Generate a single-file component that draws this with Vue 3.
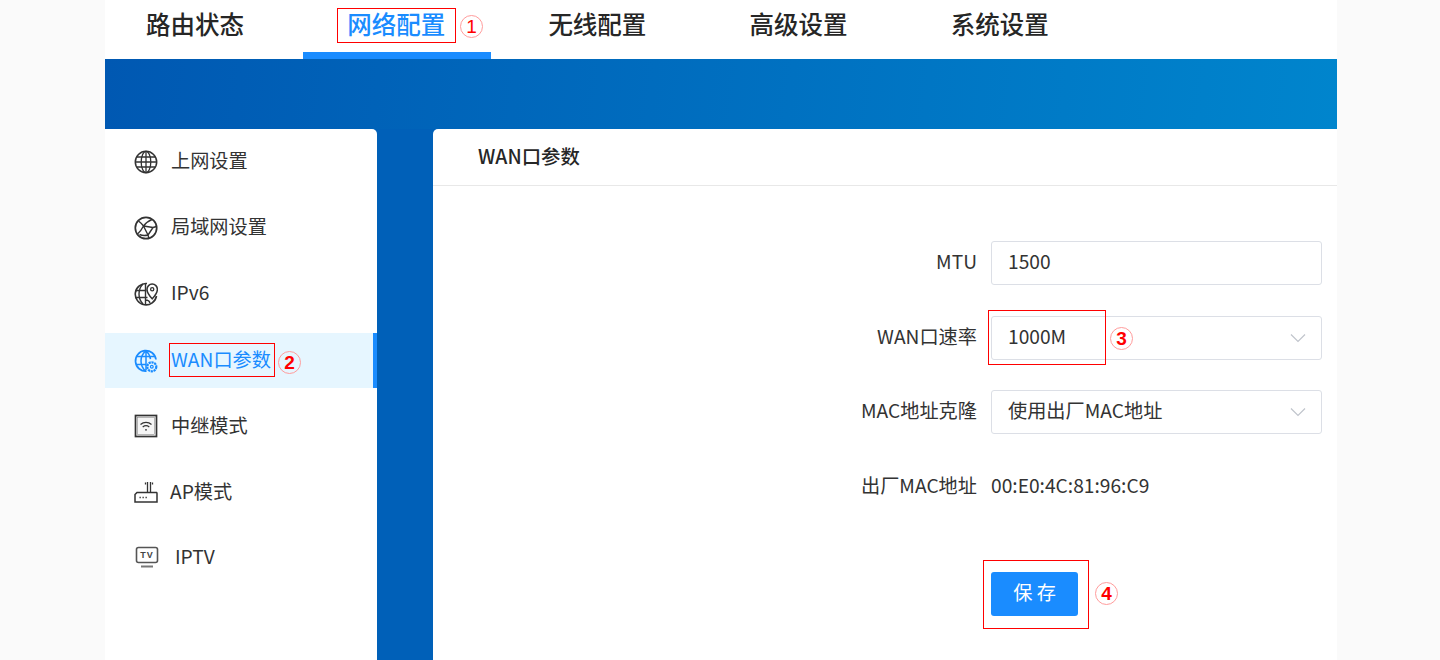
<script setup>
const tabs = ['路由状态', '网络配置', '无线配置', '高级设置', '系统设置']
const menu = [
  { key: 'globe', label: '上网设置' },
  { key: 'lan', label: '局域网设置' },
  { key: 'ipv6', label: 'IPv6' },
  { key: 'wan', label: 'WAN口参数', active: true },
  { key: 'relay', label: '中继模式' },
  { key: 'ap', label: 'AP模式' },
  { key: 'tv', label: 'IPTV' }
]
</script>

<template>
  <div class="page">
    <header class="top">
      <nav class="tabs">
        <a v-for="(t, i) in tabs" :key="t" class="tab" :class="{ on: i === 1 }">{{ t }}</a>
      </nav>
    </header>
    <div class="hero"></div>
    <div class="content">
      <aside class="side">
        <a v-for="m in menu" :key="m.key" class="item" :class="[m.key, { active: m.active }]">
          <svg class="ico" viewBox="0 0 24 24" fill="none" stroke="currentColor" stroke-width="1.3">
            <template v-if="m.key === 'globe'">
              <circle cx="12" cy="12" r="10.7" stroke-width="1.5" />
              <ellipse cx="12" cy="12" rx="4.8" ry="10.7" />
              <path d="M12 1.300v21.400M1.300 12h21.400M3 7h18M3 17h18" />
            </template>
            <template v-else-if="m.key === 'lan'">
              <circle cx="12" cy="12" r="10.700" stroke-width="1.700" />
              <path d="M4.500 5c2 1.500 3.500 3 5 5M9.500 10C12 7 15 4.500 18 3.500M9.500 10l9.500 1.500M9.500 10 14 19M14 19l5-7.500M19 11.500l3.500-1M9.500 10c-1.500 3-3.500 6-6 8M14 19c-3 .8-5.500.8-8.500-.5M14 19l1 3.500" stroke-width="1.400" />
            </template>
            <template v-else-if="m.key === 'ipv6'">
              <path d="M13 1.500A10.700 10.700 0 1 0 22.500 14" stroke-width="1.600" />
              <path d="M9 2c-3 3-4 6.500-4 10s1 7 4 10M1.500 8.500h11M1.500 15.500h12M11.500 1.500v21M11.500 18c3 0 4 1 4.500 3" stroke-width="1.400" />
              <path d="M18.200 16.800s-5.200-5.400-5.200-9.500a5.200 5.200 0 0 1 10.400 0c0 4.100-5.200 9.500-5.200 9.500z" fill="#fff" stroke-width="1.500" />
              <circle cx="18.200" cy="7.300" r="1.600" />
            </template>
            <template v-else-if="m.key === 'wan'">
              <path d="M12.500 22.200A10.300 10.300 0 1 1 22 10.500" stroke-width="1.700" />
              <path d="M12 1.700c-3 2.500-5 6-5 10.300s2 8 5 10.300M12 1.700c2.500 2.200 4 5 4.500 8.400M2.500 7.500h18M2.500 15.500h9.500M12 1.700V21" stroke-width="1.500" />
              <circle cx="17.800" cy="17.800" r="4.500" fill="#e6f6ff" stroke-width="2.200" stroke-dasharray="2.200 .7" />
              <circle cx="17.800" cy="17.800" r="1.400" stroke-width="1.200" />
            </template>
            <template v-else-if="m.key === 'relay'">
              <rect x="1.500" y="1.500" width="21" height="21" stroke-width="1.700" fill="#f5f5f5" />
              <rect x="3.500" y="3.500" width="17" height="17" stroke-width=".5" stroke="#777" />
              <path d="M6.500 10.500c3.200-2.800 7.800-2.800 11 0M8.700 13c2-1.600 4.600-1.600 6.600 0" stroke-width="1.200" />
              <circle cx="12" cy="15.800" r=".9" fill="currentColor" stroke="none" />
            </template>
            <template v-else-if="m.key === 'ap'">
              <path d="M1 14.500 3 12.500h19.500a1 1 0 0 1 .5 1v8.500H1z" stroke-width="1.500" />
              <path d="M5.500 17.500h1.300M8.500 17.500h1.300M11.500 17.500h1.300" stroke-width="1.700" />
              <path d="M13.500 2v10.500M16.500 2v10.500" />
              <path d="M11.500 2.500v2M18.500 2.500v2" />
            </template>
            <template v-else>
              <rect x="2.500" y="1.500" width="21" height="15" rx="2" stroke-width="1.600" stroke="#555" />
              <path d="M7 20.500h12" stroke-width="2" stroke="#777" />
              <text class="tv-text" x="13" y="12.300" text-anchor="middle">TV</text>
            </template>
          </svg>
          <span class="lab">{{ m.label }}</span>
        </a>
      </aside>

      <main class="main">
        <h2 class="title">WAN口参数</h2>
        <form class="form" @submit.prevent>
          <div class="row">
            <label class="key">MTU</label>
            <div class="field"><span class="txt">1500</span></div>
          </div>
          <div class="row">
            <label class="key">WAN口速率</label>
            <div class="field select">
              <span class="txt">1000M</span>
              <svg class="chev" viewBox="0 0 16 10" fill="none" stroke="#c0c4cc" stroke-width="1.200"><path d="M1 1.500l7 7 7-7" /></svg>
            </div>
          </div>
          <div class="row">
            <label class="key">MAC地址克隆</label>
            <div class="field select">
              <span class="txt">使用出厂MAC地址</span>
              <svg class="chev" viewBox="0 0 16 10" fill="none" stroke="#c0c4cc" stroke-width="1.200"><path d="M1 1.500l7 7 7-7" /></svg>
            </div>
          </div>
          <div class="row plain">
            <label class="key">出厂MAC地址</label>
            <div class="val">00:E0:4C:81:96:C9</div>
          </div>
          <div class="actions">
            <button class="save" type="button"><span class="savetxt">保 存</span></button>
          </div>
        </form>
      </main>
    </div>

    <div class="mark box1"></div>
    <div class="mark box2"></div>
    <div class="mark box3"></div>
    <div class="mark box4"></div>
    <span class="num n1">1</span>
    <span class="num n2">2</span>
    <span class="num n3">3</span>
    <span class="num n4">4</span>
  </div>
</template>

<style>
html, body { margin: 0; background: #fafafa; overflow: hidden; }
</style>

<style scoped>
.page {
  position: relative;
  width: 1232px;
  height: 660px;
  margin-left: 105px;
  overflow: hidden;
  display: flex;
  flex-direction: column;
  background: #fff;
  font-family: "Noto Sans CJK SC", "Noto Sans", sans-serif;
  color: #333;
}
.top { height: 59px; flex: none; background: #fff; }
.tabs { display: flex; gap: 103.2px; padding-left: 41px; }
.tab {
  position: relative;
  width: 98px;
  height: 59px;
  line-height: 48px;
  font-size: 24.5px;
  font-weight: 500;
  color: #262626;
  white-space: nowrap;
}
.tab.on { color: #1a8cff; }
.tab.on::after {
  content: "";
  position: absolute;
  left: -44px;
  right: -46px;
  bottom: 0;
  height: 7px;
  background: #1a8cff;
}
.hero {
  height: 70px;
  flex: none;
  background: linear-gradient(97deg, #0058b2 0%, #0085cd 100%);
}
.content {
  flex: 1;
  display: flex;
  gap: 56px;
  background: #0060b8;
}
.side {
  width: 272px;
  flex: none;
  display: flex;
  flex-direction: column;
  padding-top: 5px;
  background: #fff;
  border-radius: 0 5px 0 0;
}
.item {
  display: flex;
  align-items: center;
  flex: none;
  height: 55px;
  margin-bottom: 11px;
  padding-left: 29px;
  font-size: 19.2px;
  color: #333;
}
.item.active {
  margin-top: 1px;
  margin-bottom: 10px;
  background: #e6f6ff;
  color: #1a8cff;
  box-shadow: inset -4px 0 0 #1a8cff;
}
.lab { padding-bottom: 4px; }
.relay .lab, .ap .lab { padding-bottom: 2px; }
.ico { width: 24px; height: 24px; flex: none; margin-right: 13px; color: #333; }
.active .ico { color: #1a8cff; }
.ap .lab { margin-left: -1px; }
.tv .ico { margin-right: 17px; overflow: visible; }
.tv-text {
  font-family: "Liberation Sans", sans-serif;
  font-size: 9px;
  font-weight: 700;
  letter-spacing: 1px;
  fill: #444;
  stroke: none;
}
.main {
  flex: 1;
  min-width: 0;
  background: #fff;
  border-radius: 5px 0 0 0;
}
.title {
  margin: 0;
  height: 56px;
  padding-left: 45px;
  line-height: 54px;
  font-size: 19.4px;
  font-weight: 500;
  color: #262626;
  border-bottom: 1px solid #e8e8e8;
}
.form { padding-top: 55px; padding-right: 15px; }
.row {
  display: flex;
  align-items: center;
  height: 44px;
  margin-bottom: 31px;
}
.row:nth-child(2) { margin-bottom: 30px; }
.row.plain { margin-bottom: 0; }
.key {
  width: 544px;
  flex: none;
  margin-right: 14px;
  padding-bottom: 4px;
  text-align: right;
  font-size: 19.2px;
  color: #333;
}
.field {
  flex: 1;
  height: 44px;
  box-sizing: border-box;
  display: flex;
  align-items: center;
  justify-content: space-between;
  padding: 0 15px 0 16px;
  border: 1px solid #dcdfe6;
  border-radius: 3px;
  font-size: 19.2px;
  color: #333;
}
.txt { padding-bottom: 4px; }
.chev { width: 16px; height: 10px; }
.val { padding-bottom: 4px; font-size: 19.2px; color: #333; }
.actions { padding-left: 558px; padding-top: 63px; }
.save {
  display: block;
  width: 87px;
  height: 44px;
  padding: 0;
  border: 0;
  border-radius: 3px;
  background: #1a8cff;
  color: #fff;
  font-family: inherit;
  font-size: 19.2px;
}
.savetxt { display: block; padding-bottom: 4px; }
.mark { position: absolute; border: 1px solid #f00; box-sizing: border-box; pointer-events: none; }
.box1 { left: 232px; top: 8px; width: 119px; height: 35px; }
.box2 { left: 64px; top: 343px; width: 106px; height: 34px; }
.box3 { left: 883px; top: 310px; width: 118px; height: 55px; }
.box4 { left: 878px; top: 560px; width: 106px; height: 69px; }
.num {
  position: absolute;
  width: 23px;
  height: 23px;
  box-sizing: border-box;
  border: 1px solid #ff9c9c;
  border-radius: 50%;
  text-align: center;
  line-height: 21px;
  font-size: 19px;
  font-weight: 700;
  color: #f00;
  font-family: "Liberation Sans", sans-serif;
}
.n1 { left: 355px; top: 15px; font-weight: 400; }
.n2 { left: 173px; top: 351px; }
.n3 { left: 1005px; top: 327px; }
.n4 { left: 990px; top: 582px; }
</style>
